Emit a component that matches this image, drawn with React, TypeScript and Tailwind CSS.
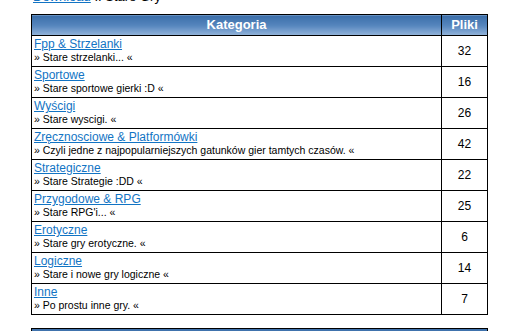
const categories = [
  { name: "Fpp & Strzelanki", desc: "Stare strzelanki...", count: 32 },
  { name: "Sportowe", desc: "Stare sportowe gierki :D", count: 16 },
  { name: "Wyścigi", desc: "Stare wyscigi.", count: 26 },
  { name: "Zręcznosciowe & Platformówki", desc: "Czyli jedne z najpopularniejszych gatunków gier tamtych czasów.", count: 42 },
  { name: "Strategiczne", desc: "Stare Strategie :DD", count: 22 },
  { name: "Przygodowe & RPG", desc: "Stare RPG'i...", count: 25 },
  { name: "Erotyczne", desc: "Stare gry erotyczne.", count: 6 },
  { name: "Logiczne", desc: "Stare i nowe gry logiczne", count: 14 },
  { name: "Inne", desc: "Po prostu inne gry.", count: 7 },
];

const headCell =
  "border border-black h-[18px] p-0 text-center text-[13px] font-bold text-white bg-gradient-to-b from-[#3b6ea9] via-[#5585bd] to-[#93b4da]";

export default function App() {
  return (
    <div className="w-[513px] h-[331px] overflow-hidden bg-white font-['Liberation_Sans',Arial,sans-serif]">
      <div className="-mt-[10px] pl-[33px] text-[13px] leading-[14px] text-black">
        <a href="#" className="text-[#1274c4] underline">Download</a> :: Stare Gry
      </div>

      <table className="mt-[10px] ml-[31px] w-[457px] table-fixed border-collapse">
        <colgroup>
          <col />
          <col className="w-[46px]" />
        </colgroup>
        <thead>
          <tr>
            <th className={headCell}>Kategoria</th>
            <th className={headCell}>Pliki</th>
          </tr>
        </thead>
        <tbody>
          {categories.map((c) => (
            <tr key={c.name} className="h-[31px]">
              <td className="border border-black px-[2px] py-0 align-middle">
                <a href="#" className="block text-[12px] leading-[14px] text-[#1274c4] underline">
                  {c.name}
                </a>
                <div className="text-[10.5px] leading-[13px] text-black">
                  » {c.desc} «
                </div>
              </td>
              <td className="border border-black p-0 text-center align-middle text-[12px] text-black">
                {c.count}
              </td>
            </tr>
          ))}
        </tbody>
      </table>

      <table className="mt-[13px] ml-[31px] w-[457px] table-fixed border-collapse">
        <thead>
          <tr>
            <th className={headCell}>Informacje</th>
          </tr>
        </thead>
      </table>
    </div>
  );
}
